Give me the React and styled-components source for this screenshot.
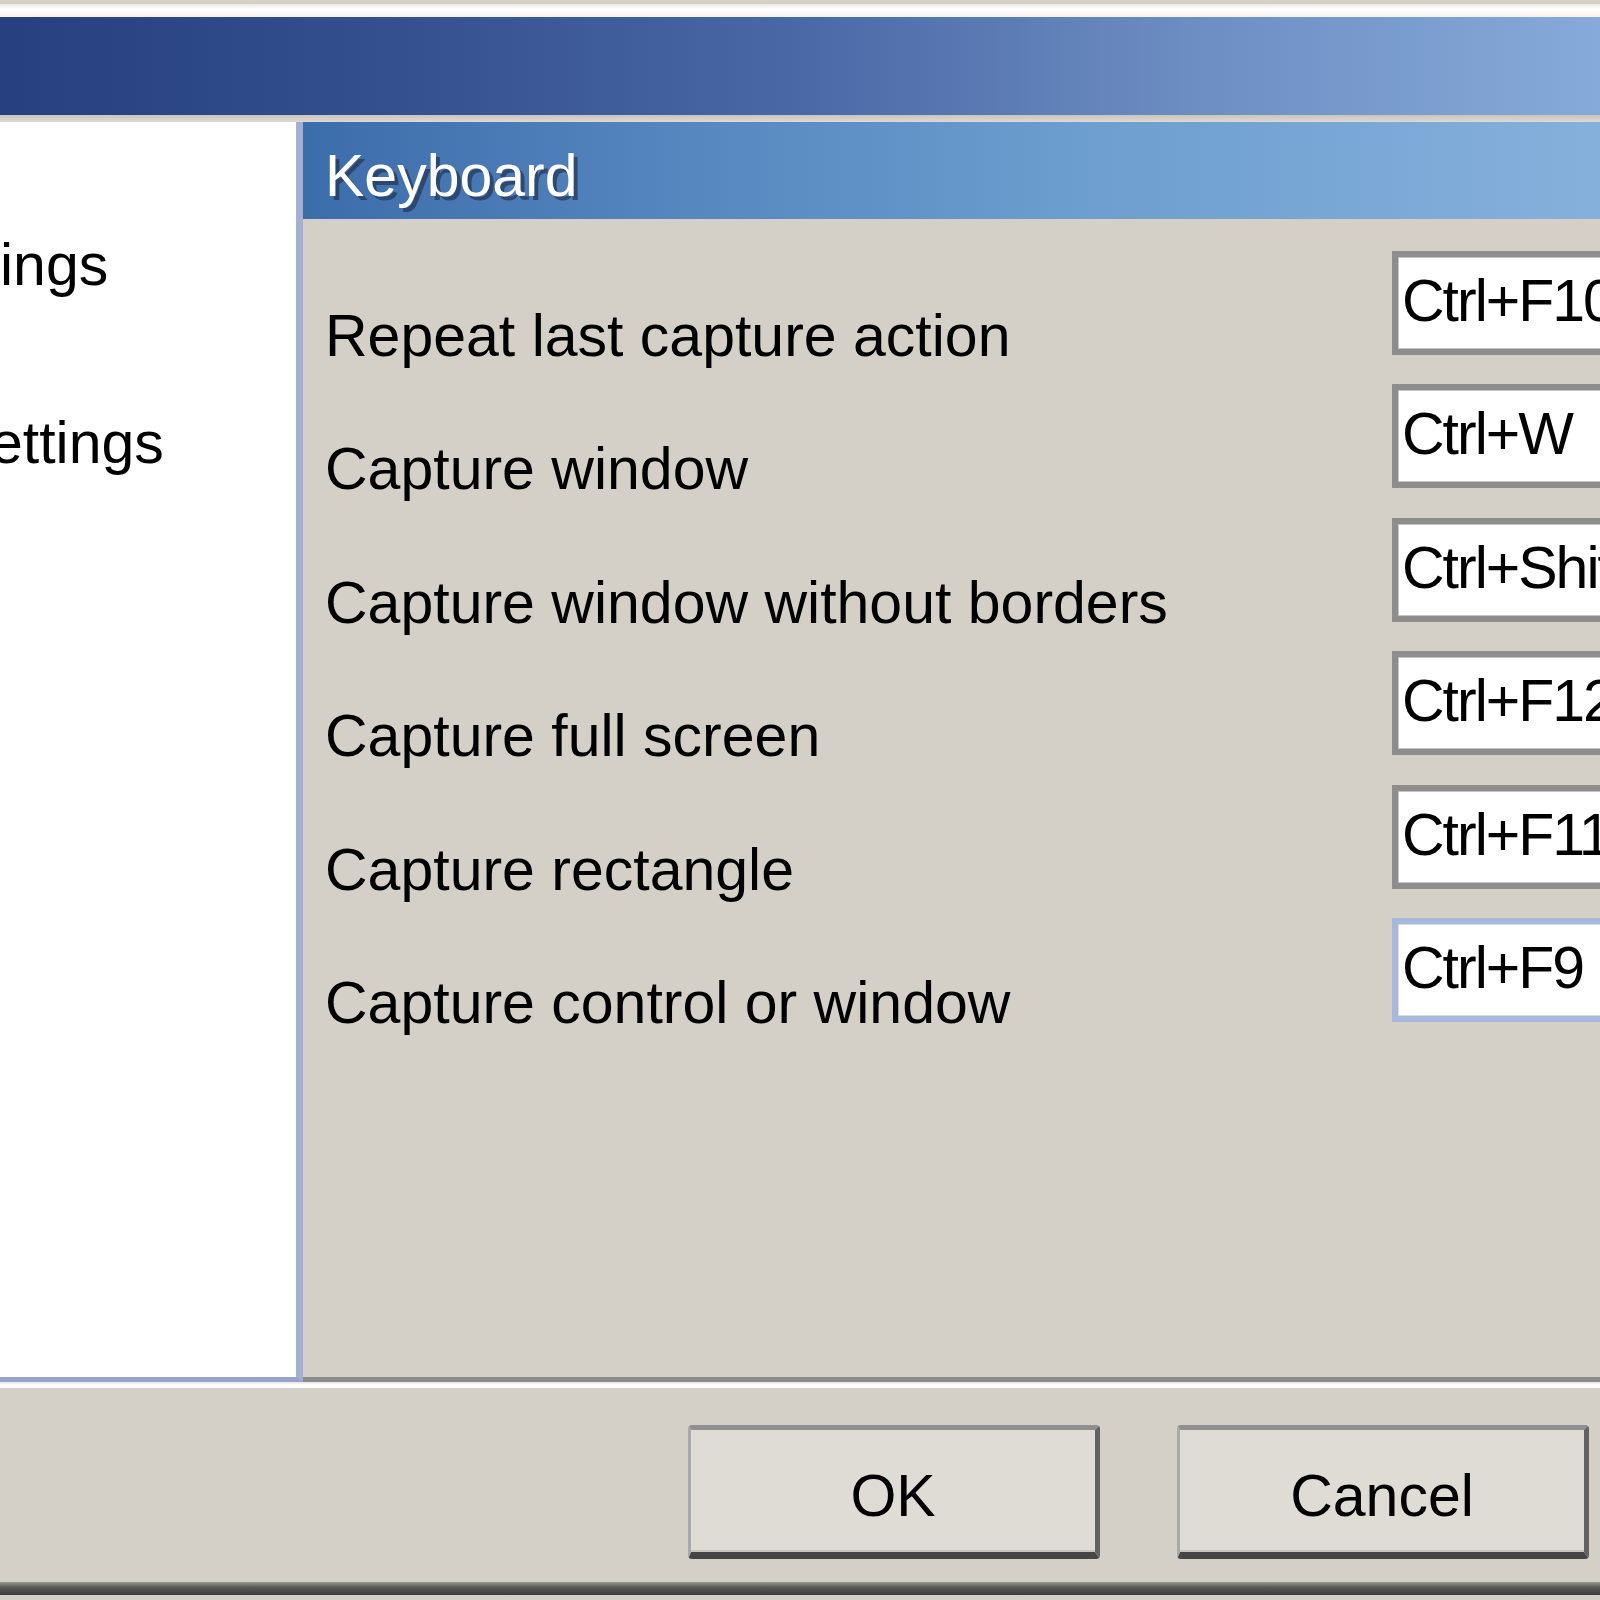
import React from 'react';
import styled, { createGlobalStyle } from 'styled-components';

const font = `"Liberation Sans", Arial, sans-serif`;

const GlobalStyle = createGlobalStyle`
  * { box-sizing: border-box; }
  html, body {
    margin: 0;
    padding: 0;
    background: #d4d0c8;
  }
`;

const Window = styled.div`
  width: 1600px;
  height: 1600px;
  overflow: hidden;
  display: flex;
  flex-direction: column;
  background: #d4d0c8;
  font-family: ${font};
  font-size: 59px;
  line-height: 59px;
  color: #000;
`;

const TopEdge = styled.div`
  height: 4px;
  background: #d4d0c8;
`;

const Highlight = styled.div`
  height: 13px;
  background: linear-gradient(180deg, #ece9e2 0%, #ffffff 40%, #f4f2ee 100%);
`;

const Banner = styled.div`
  height: 98px;
  background: linear-gradient(90deg, #27407f 0%, #34508f 25%, #4a68a6 50%, #6d8ec3 75%, #86aad9 100%);
`;

const BannerGap = styled.div`
  height: 7px;
  background: linear-gradient(180deg, #c9c5bd 0%, #dedad3 100%);
`;

const Body = styled.div`
  height: 1260px;
  display: flex;
`;

const Sidebar = styled.div`
  width: 303px;
  flex-shrink: 0;
  background: #fff;
  border-right: 7px solid #a3b0d4;
  border-bottom: 5px solid #96a4cb;
  padding-top: 114px;
  overflow: hidden;
  white-space: nowrap;
`;

const TreeItem = styled.div`
  margin-left: ${p => p.$shift || 0}px;
  & + & {
    margin-top: 119px;
  }
`;

const Content = styled.div`
  flex: 1;
  display: flex;
  flex-direction: column;
  overflow: hidden;
`;

const Header = styled.div`
  height: 97px;
  flex-shrink: 0;
  padding: 25px 0 0 22px;
  background: linear-gradient(90deg, #3c6dab 0%, #5687bf 30%, #6c9ecf 60%, #86b0dc 100%);
  color: #fff;
  text-shadow: 4px 4px 0 rgba(38, 56, 90, 0.75);
`;

const Form = styled.div`
  display: grid;
  grid-template-columns: 1067px 260px;
  row-gap: 29.4px;
  padding: 32px 0 0 22px;
  border-bottom: 5px solid #8a8a8a;
  flex: 1;
  align-content: start;
`;

const Label = styled.div`
  align-self: end;
  margin-bottom: -11px;
  white-space: nowrap;
`;

const KeyBox = styled.div`
  height: 104px;
  background: #fff;
  border: 6px solid ${p => (p.$focused ? '#a7b8dc' : '#8d8d8d')};
  box-shadow: inset 0 0 0 1px ${p => (p.$focused ? '#d4def0' : '#c4c4c4')};
  padding: 15px 4px 0;
  letter-spacing: -2px;
  white-space: nowrap;
  overflow: hidden;
`;

const Divider = styled.div`
  height: 6px;
  background: linear-gradient(180deg, #e6e3dc 0%, #ffffff 50%, #ffffff 100%);
`;

const Footer = styled.div`
  height: 194px;
  display: flex;
  justify-content: flex-end;
  align-items: flex-start;
  gap: 77px;
  padding: 37px 11px 0 0;
`;

const Button = styled.button`
  width: 412px;
  height: 134px;
  display: flex;
  align-items: center;
  justify-content: center;
  padding: 10px 0 0;
  font-family: ${font};
  font-size: 59px;
  line-height: 59px;
  color: #000;
  background: #dfdcd5;
  border-style: solid;
  border-width: 5px 5px 7px 3px;
  border-color: #8f8f8f #626262 #454545 #a9a9a9;
  border-radius: 4px;
  box-shadow: inset 0 -2px 0 #c9c5bd;
`;

const BottomEdge = styled.div`
  height: 13px;
  background: linear-gradient(180deg, #9a9894 0%, #5a5a5a 40%, #3d3d3d 100%);
`;

const hotkeys = [
  { label: 'Repeat last capture action', key: 'Ctrl+F10' },
  { label: 'Capture window', key: 'Ctrl+W' },
  { label: 'Capture window without borders', key: 'Ctrl+Shift+W' },
  { label: 'Capture full screen', key: 'Ctrl+F12' },
  { label: 'Capture rectangle', key: 'Ctrl+F11' },
  { label: 'Capture control or window', key: 'Ctrl+F9', focused: true },
];

const App = () => {
  return (
    <Window>
      <GlobalStyle />
      <TopEdge />
      <Highlight />
      <Banner />
      <BannerGap />
      <Body>
        <Sidebar>
          <TreeItem>ings</TreeItem>
          <TreeItem $shift={-10}>ettings</TreeItem>
        </Sidebar>
        <Content>
          <Header>Keyboard</Header>
          <Form>
            {hotkeys.map(h => (
              <React.Fragment key={h.label}>
                <Label>{h.label}</Label>
                <KeyBox $focused={h.focused}>{h.key}</KeyBox>
              </React.Fragment>
            ))}
          </Form>
        </Content>
      </Body>
      <Divider />
      <Footer>
        <Button>OK</Button>
        <Button>Cancel</Button>
      </Footer>
      <BottomEdge />
    </Window>
  );
};

export default App;
